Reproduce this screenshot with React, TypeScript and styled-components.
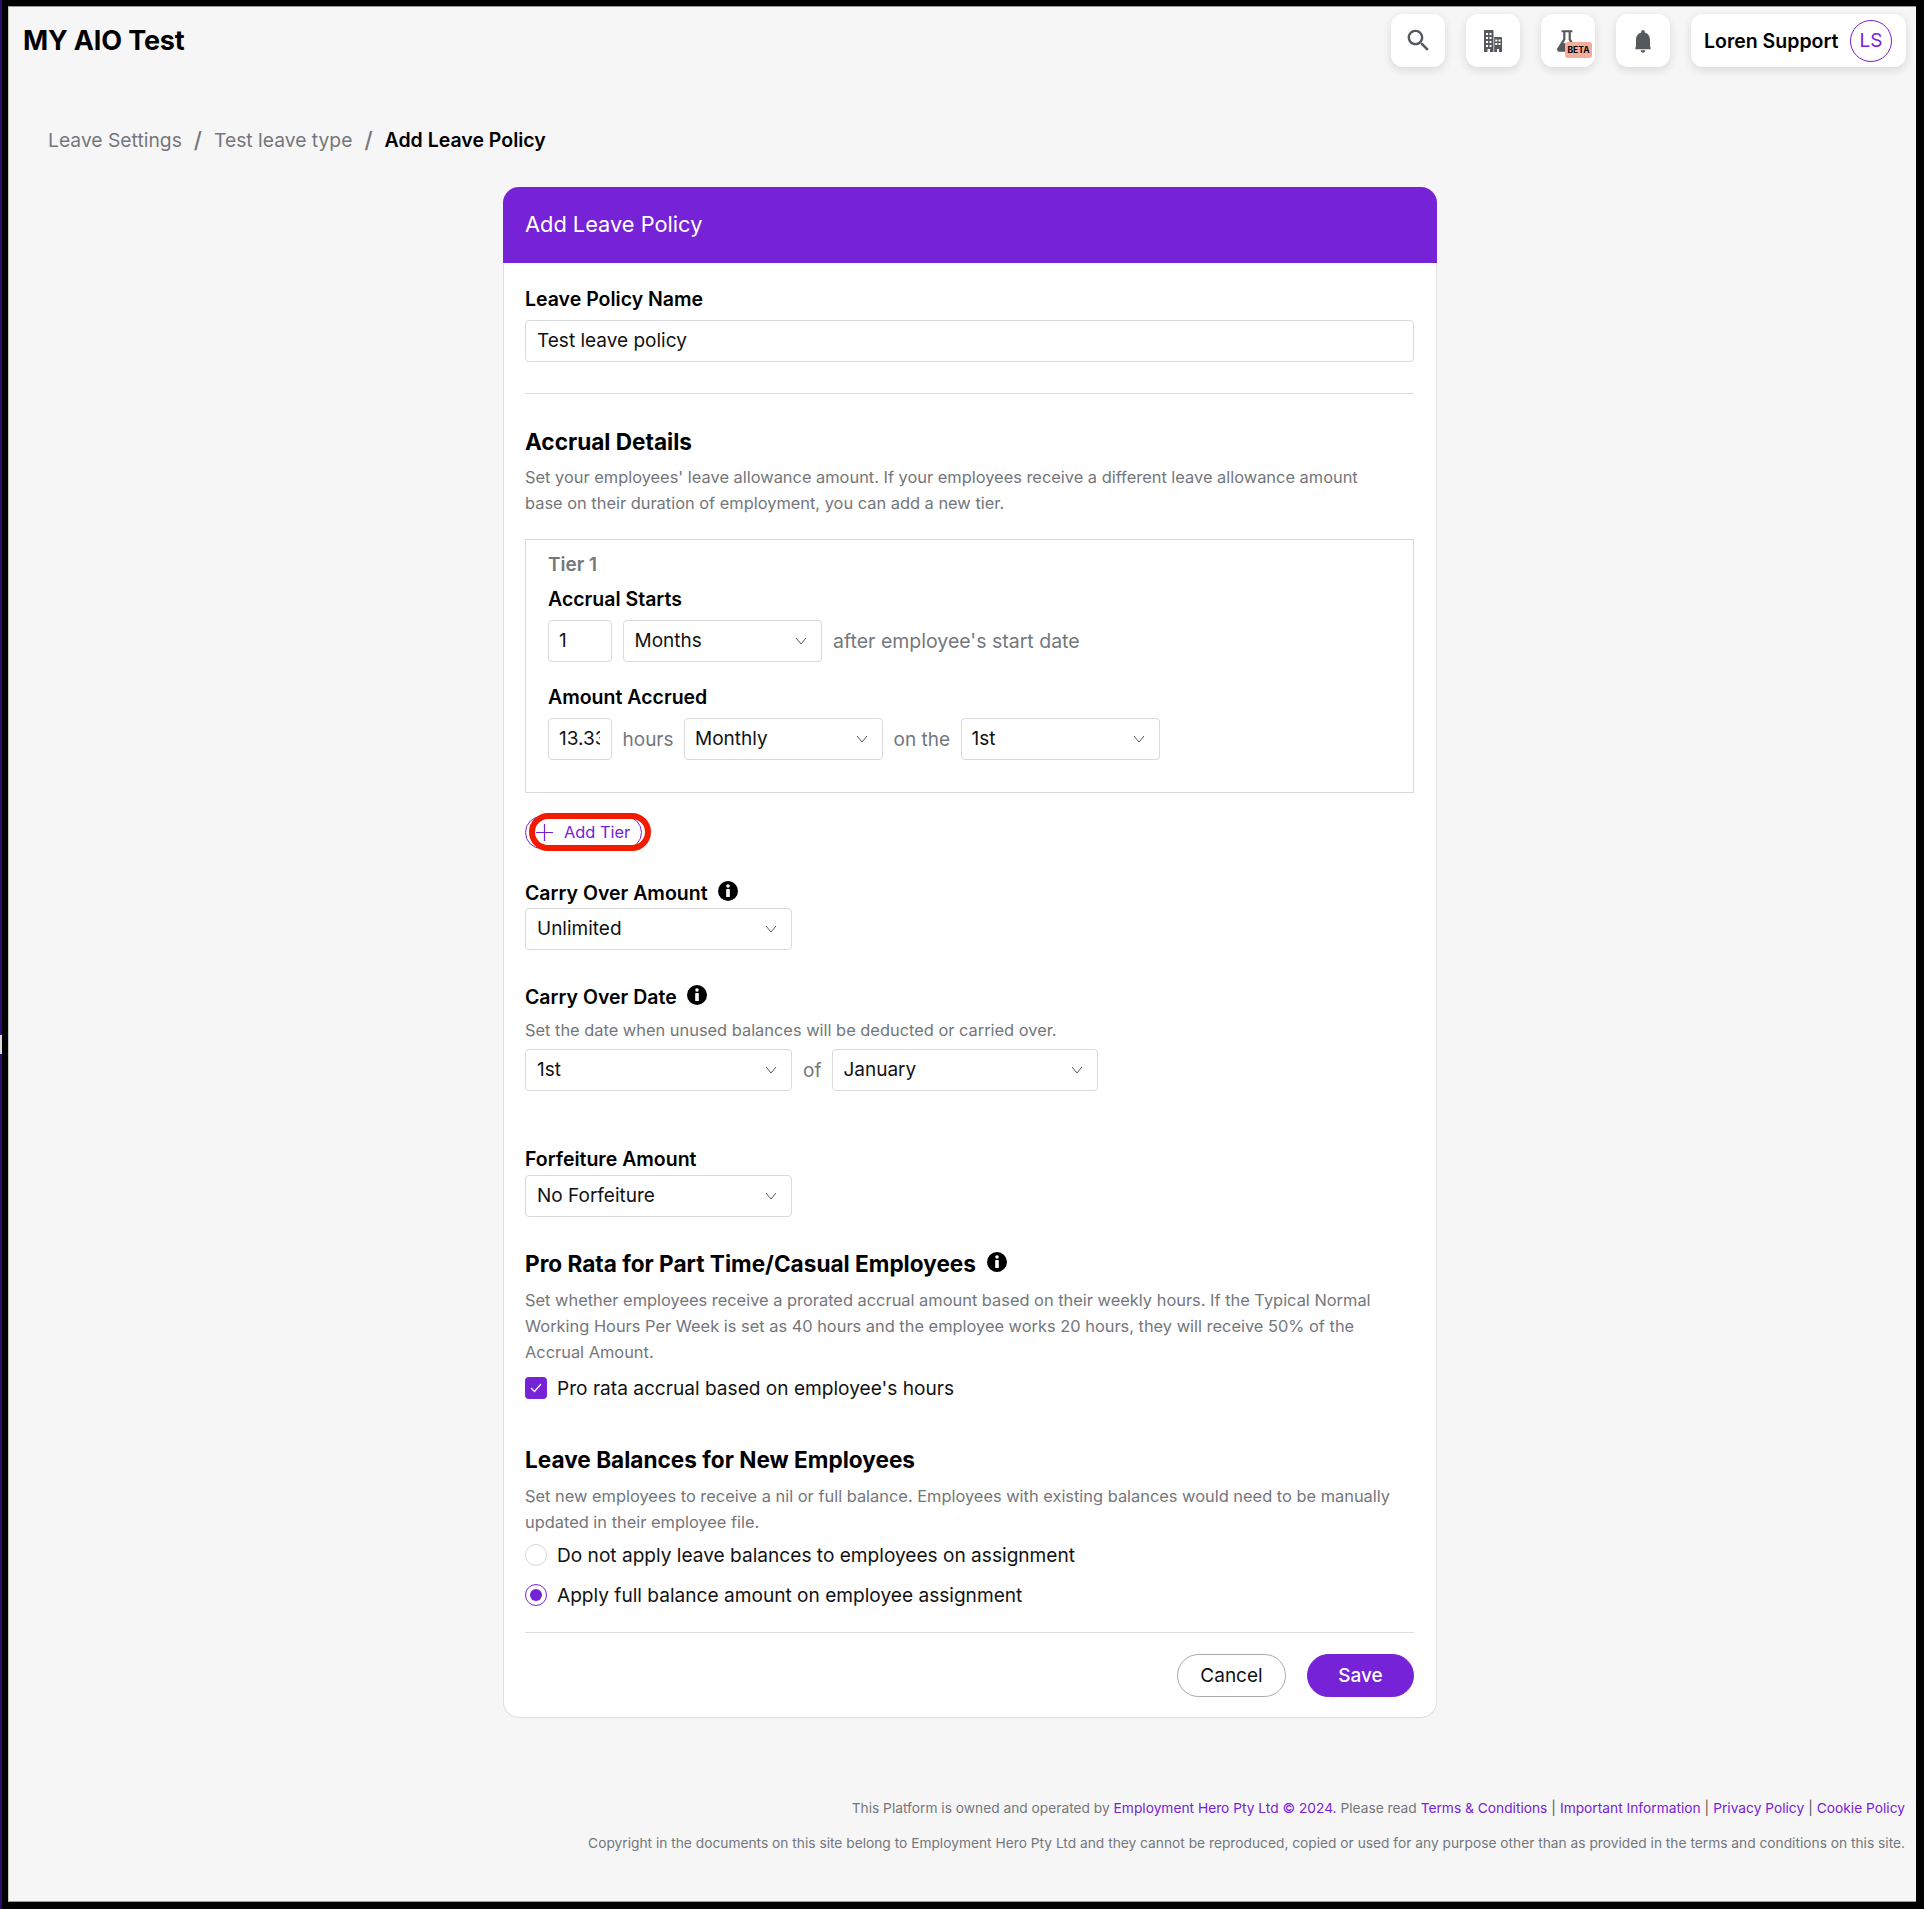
import React from "react";
import styled, { createGlobalStyle } from "styled-components";

const PURPLE = "#7622d7";
const FONT = `Inter, "Noto Sans", "Liberation Sans", sans-serif`;

const Global = createGlobalStyle`
  html, body { margin: 0; padding: 0; background: #000; }
  * { box-sizing: border-box; }
  body { font-family: ${FONT}; color: #000; }
`;

const Frame = styled.div`
  position: relative;
  width: 1924px;
  height: 1909px;
  background: #000;
  border-left: 2px solid #2a0c6e;
  padding: 6px 8px 7px 6px;
`;
const EdgeGlint = styled.span`
  position: absolute;
  left: -2px;
  top: 1035px;
  width: 2px;
  height: 19px;
  background: #d8d8d8;
`;
const Page = styled.div`
  height: 100%;
  background: #f6f6f6;
  border-top: 1px solid #9a9a9a;
  border-bottom: 1px solid #9a9a9a;
  border-left: 1px solid #c8c8c8;
  padding: 7px 10px 0 11px;
  display: flex;
  flex-direction: column;
`;
const TopBar = styled.header`
  display: flex;
  align-items: flex-start;
  justify-content: space-between;
`;
const Brand = styled.div`
  font-size: 27px;
  font-weight: 700;
  line-height: 34px;
  margin: 10px 0 0 3px;
  letter-spacing: -0.15px;
`;
const Actions = styled.div`
  display: flex;
  gap: 21px;
`;
const IconTile = styled.div`
  position: relative;
  width: 54px;
  height: 53px;
  border-radius: 12px;
  background: #fff;
  box-shadow: 0 3px 10px rgba(0, 0, 0, 0.12);
  display: flex;
  align-items: center;
  justify-content: center;
  color: #55585c;
`;
const BetaBadge = styled.span`
  position: absolute;
  right: 3px;
  bottom: 9px;
  width: 27px;
  height: 16px;
  border-radius: 3px;
  background: #f3ad9d;
  color: #000;
  font-size: 8.5px;
  font-weight: 700;
  line-height: 16px;
  text-align: center;
`;
const UserTile = styled.div`
  width: 215px;
  height: 53px;
  border-radius: 12px;
  background: #fff;
  box-shadow: 0 3px 10px rgba(0, 0, 0, 0.12);
  display: flex;
  align-items: center;
  justify-content: space-between;
  padding: 0 14px 0 13px;
  font-size: 19.5px;
  font-weight: 600;
`;
const Avatar = styled.span`
  width: 42px;
  height: 42px;
  border-radius: 50%;
  border: 1px solid ${PURPLE};
  color: ${PURPLE};
  font-size: 19px;
  font-weight: 400;
  display: flex;
  align-items: center;
  justify-content: center;
`;
const Crumbs = styled.nav`
  display: flex;
  align-items: center;
  gap: 12px;
  margin: 58px 0 0 28px;
  height: 30px;
  font-size: 19.3px;
  color: #74777c;
`;
const CrumbCurrent = styled.span`
  color: #000;
  font-weight: 600;
  font-size: 19.5px;
`;
const Slash = styled.span`
  font-size: 22px;
  font-weight: 500;
`;
const Card = styled.main`
  width: 934px;
  margin: 32px 0 0 483px;
  height: 1531px;
  background: #fff;
  border: 1px solid #dfdfe2;
  border-top: 0;
  border-radius: 16px;
`;
const CardHead = styled.div`
  height: 76px;
  margin: 0 -1px;
  background: ${PURPLE};
  border-radius: 16px 16px 0 0;
  color: #fff;
  font-size: 21.8px;
  line-height: 74px;
  padding-left: 22px;
`;
const CardBody = styled.div`
  padding: 23px 22px 0 21px;
`;
const Label = styled.div<{ $mb?: number; $mt?: number }>`
  font-size: 19.5px;
  font-weight: 600;
  line-height: 26px;
  margin-top: ${(p) => p.$mt ?? 0}px;
  margin-bottom: ${(p) => p.$mb ?? 7}px;
  display: flex;
  align-items: center;
  gap: 10px;
`;
const TextBox = styled.div<{ $w?: number; $pad?: number }>`
  width: ${(p) => (p.$w ? `${p.$w}px` : "100%")};
  height: 42px;
  flex: none;
  background: #fff;
  border: 1px solid #d9d9dc;
  border-radius: 4px;
  font-size: 19px;
  line-height: 40px;
  padding-left: ${(p) => p.$pad ?? 11}px;
  overflow: hidden;
  white-space: nowrap;
  color: #111;
`;
const Clip = styled.span`
  display: block;
  width: 41px;
  overflow: hidden;
`;
const SelectBox = styled(TextBox)`
  display: flex;
  align-items: center;
  justify-content: space-between;
  padding-right: 14px;
  padding-top: 1px;
`;
const Divider = styled.hr<{ $mt: number }>`
  border: 0;
  height: 1px;
  background: #dcdce0;
  margin: ${(p) => p.$mt}px 0 0;
`;
const Heading = styled.h2<{ $mt: number }>`
  margin: ${(p) => p.$mt}px 0 0;
  font-size: 22.6px;
  font-weight: 700;
  line-height: 30px;
  display: flex;
  align-items: center;
  gap: 11px;
`;
const Help = styled.p<{ $mt?: number }>`
  margin: ${(p) => p.$mt ?? 7}px 0 0;
  max-width: 872px;
  font-size: 16.4px;
  line-height: 26.3px;
  color: #73767b;
`;
const TierBox = styled.section`
  margin-top: 22px;
  height: 254px;
  border: 1px solid #d9d9dc;
  padding: 11px 22px 0;
`;
const TierTitle = styled.div`
  font-size: 19px;
  font-weight: 600;
  color: #74777c;
  line-height: 28px;
`;
const Row = styled.div<{ $mt?: number; $gap?: number }>`
  display: flex;
  align-items: center;
  gap: ${(p) => p.$gap ?? 10.5}px;
  margin-top: ${(p) => p.$mt ?? 0}px;
`;
const Note = styled.span<{ $size?: number }>`
  font-size: ${(p) => p.$size ?? 19}px;
  padding-top: 1px;
  color: #74777c;
  white-space: nowrap;
`;
const AddWrap = styled.div`
  position: relative;
  width: 117px;
  height: 33px;
  margin-top: 23px;
`;
const AddTier = styled.div`
  width: 100%;
  height: 100%;
  border: 1px solid ${PURPLE};
  border-radius: 17px;
  color: ${PURPLE};
  font-size: 16.4px;
  display: flex;
  align-items: center;
  gap: 11px;
  padding-left: 10px;
`;
const RedRing = styled.span`
  position: absolute;
  left: 4px;
  top: -3px;
  width: 122px;
  height: 38px;
  border: 6px solid #f21b00;
  border-radius: 19px;
`;
const Info = styled.svg`
  width: 20px;
  height: 20px;
  flex: none;
  margin-top: -4px;
`;
const CheckRow = styled.div<{ $mt: number }>`
  display: flex;
  align-items: center;
  gap: 10px;
  margin-top: ${(p) => p.$mt}px;
  font-size: 19.1px;
  line-height: 22px;
  color: #111;
`;
const CheckBox = styled.span`
  width: 22px;
  height: 22px;
  flex: none;
  border-radius: 4px;
  background: ${PURPLE};
  display: flex;
  align-items: center;
  justify-content: center;
`;
const Radio = styled.span<{ $on?: boolean }>`
  width: 22px;
  height: 22px;
  flex: none;
  border-radius: 50%;
  background: #fff;
  border: 1px solid ${(p) => (p.$on ? PURPLE : "#d9d9dc")};
  display: flex;
  align-items: center;
  justify-content: center;
  &::after {
    content: "";
    display: ${(p) => (p.$on ? "block" : "none")};
    width: 12px;
    height: 12px;
    border-radius: 50%;
    background: ${PURPLE};
  }
`;
const FormActions = styled.div`
  display: flex;
  justify-content: flex-end;
  gap: 21px;
  margin-top: 21px;
`;
const Button = styled.div<{ $primary?: boolean }>`
  height: 43px;
  width: ${(p) => (p.$primary ? 107 : 109)}px;
  border-radius: 22px;
  border: 1px solid ${(p) => (p.$primary ? PURPLE : "#a9a9ad")};
  background: ${(p) => (p.$primary ? PURPLE : "#fff")};
  color: ${(p) => (p.$primary ? "#fff" : "#111")};
  font-size: 19px;
  font-weight: ${(p) => (p.$primary ? 500 : 400)};
  display: flex;
  align-items: center;
  justify-content: center;
`;
const Footer = styled.footer`
  margin-top: 80px;
  padding-right: 1px;
  text-align: right;
  font-size: 13.75px;
  color: #74777c;
`;
const FootLine = styled.div<{ $mt?: number }>`
  line-height: 20px;
  margin-top: ${(p) => p.$mt ?? 0}px;
`;
const FootLink = styled.span`
  color: ${PURPLE};
`;
const Sep = styled.span`
  color: #55585c;
  margin: 0 4px;
`;
const FlaskSvg = styled.svg`
  margin-right: 2px;
`;
const AfterNote = styled(Note)`
  margin-left: 1px;
`;

const Chevron = () => (
  <svg width="12" height="8" viewBox="0 0 12 8" fill="none" stroke="#55585c" strokeWidth="1">
    <path d="M1 1l5 6 5-6" />
  </svg>
);

const InfoIcon = () => (
  <Info viewBox="0 0 20 20">
    <circle cx="10" cy="10" r="10" fill="#000" />
    <circle cx="10" cy="5" r="1.8" fill="#fff" />
    <rect x="8.2" y="8" width="3.6" height="8" rx="0.6" fill="#fff" />
  </Info>
);

const Select = ({ w, pad, children }: { w: number; pad?: number; children: React.ReactNode }) => (
  <SelectBox $w={w} $pad={pad}>
    <span>{children}</span>
    <Chevron />
  </SelectBox>
);

export default function App() {
  return (
    <>
      <Global />
      <Frame>
        <EdgeGlint />
        <Page>
          <TopBar>
            <Brand>MY AIO Test</Brand>
            <Actions>
              <IconTile>
                <svg width="29" height="29" viewBox="0 0 24 24" fill="currentColor">
                  <path d="M15.5 14h-.79l-.28-.27C15.41 12.59 16 11.11 16 9.5 16 5.91 13.09 3 9.5 3S3 5.91 3 9.5 5.91 16 9.5 16c1.61 0 3.09-.59 4.23-1.57l.27.28v.79l5 4.99L20.49 19l-4.99-5zm-6 0C7.01 14 5 11.99 5 9.5S7.01 5 9.5 5 14 7.01 14 9.5 11.99 14 9.5 14z" />
                </svg>
              </IconTile>
              <IconTile>
                <svg width="18" height="22" viewBox="0 0 18 22" fill="currentColor">
                  <path fillRule="evenodd" d="M0 1c0-.6.4-1 1-1h7.5c.6 0 1 .4 1 1v21H6v-3H3.5v3H0V1zM2 3v2h2V3H2zm3.5 0v2h2V3h-2zM2 7v2h2V7H2zm3.5 0v2h2V7h-2zM2 11v2h2v-2H2zm3.5 0v2h2v-2h-2zM2 15v2h2v-2H2zm3.5 0v2h2v-2h-2z" />
                  <path fillRule="evenodd" d="M10.2 7H17c.6 0 1 .4 1 1v14h-3v-3h-2v3h-2.8V7zM11.3 9.500v2h2v-2h-2zm3.2 0v2h2v-2h-2zm-3.2 3.500v2h2v-2h-2zm3.200 0v2h2v-2h-2z" />
                </svg>
              </IconTile>
              <IconTile>
                <FlaskSvg width="26" height="26" viewBox="0 0 24 24" fill="currentColor">
                  <path d="M7 2h10v2h-1.500v6.200l5.300 8.600c.8 1.400-.2 3.200-1.800 3.200H4.900c-1.600 0-2.600-1.800-1.800-3.200l5.400-8.600V4H7V2zm3.500 2v6.800L8.600 14h6.800l-1.900-3.200V4h-3z" />
                </FlaskSvg>
                <BetaBadge>BETA</BetaBadge>
              </IconTile>
              <IconTile>
                <svg width="28" height="28" viewBox="0 0 24 24" fill="currentColor">
                  <path d="M12 22c1.100 0 2-.9 2-2h-4c0 1.100.89 2 2 2zm6-6v-5c0-3.070-1.640-5.640-4.500-6.320V4c0-.83-.67-1.500-1.500-1.500s-1.500.67-1.500 1.500v.68C7.630 5.360 6 7.920 6 11v5l-.5 2v1h13v-1l-.5-2z" />
                </svg>
              </IconTile>
              <UserTile>
                <span>Loren Support</span>
                <Avatar>LS</Avatar>
              </UserTile>
            </Actions>
          </TopBar>

          <Crumbs>
            <span>Leave Settings</span>
            <Slash>/</Slash>
            <span>Test leave type</span>
            <Slash>/</Slash>
            <CrumbCurrent>Add Leave Policy</CrumbCurrent>
          </Crumbs>

          <Card>
            <CardHead>Add Leave Policy</CardHead>
            <CardBody>
              <Label $mb={8}>Leave Policy Name</Label>
              <TextBox>Test leave policy</TextBox>
              <Divider $mt={31} />
              <Heading $mt={33}>Accrual Details</Heading>
              <Help>
                Set your employees' leave allowance amount. If your employees receive a different leave allowance amount
                base on their duration of employment, you can add a new tier.
              </Help>
              <TierBox>
                <TierTitle>Tier 1</TierTitle>
                <Label $mb={8} $mt={7}>Accrual Starts</Label>
                <Row>
                  <TextBox $w={64} $pad={10}>1</TextBox>
                  <Select w={199}>Months</Select>
                  <AfterNote $size={19.5}>after employee's start date</AfterNote>
                </Row>
                <Label $mb={8} $mt={22}>Amount Accrued</Label>
                <Row>
                  <TextBox $w={64} $pad={10}><Clip>13.33</Clip></TextBox>
                  <Note>hours</Note>
                  <Select w={199} pad={10}>Monthly</Select>
                  <Note>on the</Note>
                  <Select w={199} pad={10}>1st</Select>
                </Row>
              </TierBox>
              <AddWrap>
                <AddTier>
                  <svg width="17" height="17" viewBox="0 0 17 17" stroke={PURPLE} strokeWidth="1.2">
                    <path d="M8.500 0v17M0 8.500h17" />
                  </svg>
                  <span>Add Tier</span>
                </AddTier>
                <RedRing />
              </AddWrap>
              <Label $mt={31} $mb={2}>Carry Over Amount <InfoIcon /></Label>
              <Select w={267}>Unlimited</Select>
              <Label $mt={34} $mb={7}>Carry Over Date <InfoIcon /></Label>
              <Help $mt={0}>Set the date when unused balances will be deducted or carried over.</Help>
              <Row $mt={6} $gap={11}>
                <Select w={267}>1st</Select>
                <Note>of</Note>
                <Select w={266} pad={10}>January</Select>
              </Row>
              <Label $mt={55} $mb={3}>Forfeiture Amount</Label>
              <Select w={267}>No Forfeiture</Select>
              <Heading $mt={32}>Pro Rata for Part Time/Casual Employees <InfoIcon /></Heading>
              <Help $mt={8}>
                Set whether employees receive a prorated accrual amount based on their weekly hours. If the Typical Normal
                Working Hours Per Week is set as 40 hours and the employee works 20 hours, they will receive 50% of the
                Accrual Amount.
              </Help>
              <CheckRow $mt={11}>
                <CheckBox>
                  <svg width="12" height="10" viewBox="0 0 12 10" fill="none" stroke="#fff" strokeWidth="1.2">
                    <path d="M1 5l3.500 3.500L11 1" />
                  </svg>
                </CheckBox>
                Pro rata accrual based on employee's hours
              </CheckRow>
              <Heading $mt={46}>Leave Balances for New Employees</Heading>
              <Help $mt={8}>
                Set new employees to receive a nil or full balance. Employees with existing balances would need to be manually
                updated in their employee file.
              </Help>
              <CheckRow $mt={9}><Radio />Do not apply leave balances to employees on assignment</CheckRow>
              <CheckRow $mt={18}><Radio $on />Apply full balance amount on employee assignment</CheckRow>
              <Divider $mt={26} />
              <FormActions>
                <Button>Cancel</Button>
                <Button $primary>Save</Button>
              </FormActions>
            </CardBody>
          </Card>

          <Footer>
            <FootLine>
              This Platform is owned and operated by <FootLink>Employment Hero Pty Ltd © 2024.</FootLink> Please read{" "}
              <FootLink>Terms &amp; Conditions</FootLink><Sep>|</Sep>
              <FootLink>Important Information</FootLink><Sep>|</Sep>
              <FootLink>Privacy Policy</FootLink><Sep>|</Sep>
              <FootLink>Cookie Policy</FootLink>
            </FootLine>
            <FootLine $mt={15}>
              Copyright in the documents on this site belong to Employment Hero Pty Ltd and they cannot be reproduced, copied or used for any purpose other than as provided in the terms and conditions on this site.
            </FootLine>
          </Footer>
        </Page>
      </Frame>
    </>
  );
}
